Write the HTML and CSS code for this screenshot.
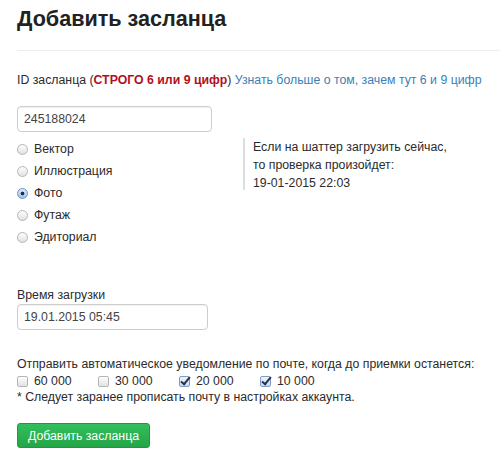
FILE: index.html
```html
<!DOCTYPE html>
<html lang="ru">
<head>
<meta charset="utf-8">
<link rel="stylesheet" href="styles.css">
</head>
<body>
<div class="page">
  <h1 class="title">Добавить засланца</h1>
  <hr class="rule">
  <p class="idlabel">ID засланца (<b class="strict">СТРОГО 6 или 9 цифр</b>) <a class="link" href="#">Узнать больше о том, зачем тут 6 и 9 цифр</a></p>
  <input class="field field-id" type="text" value="245188024">
  <div class="typerow">
    <div class="radios">
      <label class="radio"><input type="radio" name="t"><span>Вектор</span></label>
      <label class="radio"><input type="radio" name="t"><span>Иллюстрация</span></label>
      <label class="radio"><input type="radio" name="t" checked><span>Фото</span></label>
      <label class="radio"><input type="radio" name="t"><span>Футаж</span></label>
      <label class="radio"><input type="radio" name="t"><span>Эдиториал</span></label>
    </div>
    <div class="note">Если на шаттер загрузить сейчас,<br>то проверка произойдет:<br>19-01-2015 22:03</div>
  </div>
  <div class="timeblock">
    <div class="timelabel">Время загрузки</div>
    <input class="field field-time" type="text" value="19.01.2015 05:45">
  </div>
  <div class="notify">
    <div>Отправить автоматическое уведомление по почте, когда до приемки останется:</div>
    <div class="checks">
      <label class="check"><input type="checkbox"><span>60 000</span></label>
      <label class="check"><input type="checkbox"><span>30 000</span></label>
      <label class="check"><input type="checkbox" checked><span>20 000</span></label>
      <label class="check"><input type="checkbox" checked><span>10 000</span></label>
    </div>
    <div class="foot">* Следует заранее прописать почту в настройках аккаунта.</div>
  </div>
  <button class="btn" type="button">Добавить засланца</button>
</div>
</body>
</html>
```
FILE: styles.css
```css
html, body {
  margin: 0;
  padding: 0;
  background: #fff;
}
body {
  font-family: "Liberation Sans", Arial, sans-serif;
  font-size: 12.3px;
  color: #2b2b2b;
}
.page {
  padding: 0 0 0 17px;
}
.title {
  margin: 0;
  padding-top: 5px;
  font-size: 21.6px;
  line-height: 28px;
  font-weight: bold;
  color: #222;
}
.rule {
  margin: 17px 0 0 0;
  border: 0;
  border-top: 1px solid #eee;
  height: 0;
}
.idlabel {
  margin: 20px 0 0 0;
  line-height: 18px;
}
.strict {
  color: #b0101e;
}
.link {
  color: #3a7fb5;
  text-decoration: none;
}
.field {
  box-sizing: border-box;
  height: 26px;
  border: 1px solid #ccc;
  border-radius: 4px;
  padding: 0 6px;
  font-family: "Liberation Sans", Arial, sans-serif;
  font-size: 12.3px;
  color: #444;
  display: block;
  box-shadow: inset 0 1px 1px rgba(0,0,0,0.06);
}
.field-id {
  margin-top: 17px;
  width: 195px;
}
.typerow {
  display: flex;
  margin-top: 6px;
}
.radios {
  display: flex;
  flex-direction: column;
  width: 226px;
}
.radio {
  display: flex;
  align-items: center;
  height: 22px;
}
.radio input {
  appearance: none;
  -webkit-appearance: none;
  margin: 0 6px 0 0;
  width: 11px;
  height: 11px;
  border-radius: 50%;
  border: 1px solid #b5b5b5;
  background: linear-gradient(#fdfdfd, #e2e2e2);
  box-sizing: border-box;
  position: relative;
}
.radio input:checked {
  border-color: #6f93c4;
  background: radial-gradient(circle, #1f2f45 0 1.6px, transparent 2.2px), linear-gradient(#dbe9fa, #9fc1ec);
}
.check input {
  appearance: none;
  -webkit-appearance: none;
  margin: 0 6px 0 0;
  width: 11px;
  height: 11px;
  border-radius: 2px;
  border: 1px solid #b5b5b5;
  background: linear-gradient(#fdfdfd, #e2e2e2);
  box-sizing: border-box;
  position: relative;
  overflow: visible;
}
.check input:checked {
  border-color: #7f9cc6;
  background: linear-gradient(#eef4fb, #c8daf2);
}
.check input:checked::after {
  content: "";
  position: absolute;
  left: 3px;
  top: -2px;
  width: 3px;
  height: 8px;
  border-right: 2px solid #23324a;
  border-bottom: 2px solid #23324a;
  transform: rotate(40deg);
}
.note {
  border-left: 2px solid #ddd;
  padding: 0 0 0 8px;
  line-height: 18px;
  height: 52px;
  overflow: visible;
}
.timeblock {
  margin-top: 39px;
}
.timelabel {
  line-height: 16px;
}
.field-time {
  margin-top: 1px;
  width: 191px;
}
.notify {
  margin-top: 26px;
  line-height: 16px;
}
.checks {
  display: flex;
  margin-top: 1px;
}
.check {
  display: flex;
  align-items: center;
  width: 81px;
}
.foot {
  margin-top: 0;
}
.btn {
  margin-top: 18px;
  width: 133px;
  height: 25px;
  border: 1px solid #1e9a3e;
  border-radius: 3px;
  background: linear-gradient(#33bf5c, #23a548);
  color: #fff;
  font-family: "Liberation Sans", Arial, sans-serif;
  font-size: 12.3px;
  padding: 0;
}
```
